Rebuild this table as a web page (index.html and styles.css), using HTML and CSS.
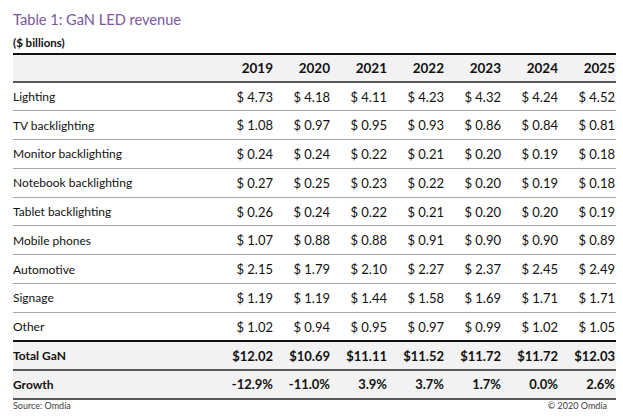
FILE: index.html
```html
<!DOCTYPE html>
<html>
<head>
<meta charset="utf-8">
<link rel="stylesheet" href="styles.css">
</head>
<body>
<div class="page">
  <div class="title">Table 1: GaN LED revenue</div>
  <div class="unit">($ billions)</div>
  <table class="rev">
    <thead>
      <tr><th class="lab"></th><th>2019</th><th>2020</th><th>2021</th><th>2022</th><th>2023</th><th>2024</th><th>2025</th></tr>
    </thead>
    <tbody>
      <tr><td class="lab">Lighting</td><td>$ 4.73</td><td>$ 4.18</td><td>$ 4.11</td><td>$ 4.23</td><td>$ 4.32</td><td>$ 4.24</td><td>$ 4.52</td></tr>
      <tr><td class="lab">TV backlighting</td><td>$ 1.08</td><td>$ 0.97</td><td>$ 0.95</td><td>$ 0.93</td><td>$ 0.86</td><td>$ 0.84</td><td>$ 0.81</td></tr>
      <tr><td class="lab">Monitor backlighting</td><td>$ 0.24</td><td>$ 0.24</td><td>$ 0.22</td><td>$ 0.21</td><td>$ 0.20</td><td>$ 0.19</td><td>$ 0.18</td></tr>
      <tr><td class="lab">Notebook backlighting</td><td>$ 0.27</td><td>$ 0.25</td><td>$ 0.23</td><td>$ 0.22</td><td>$ 0.20</td><td>$ 0.19</td><td>$ 0.18</td></tr>
      <tr><td class="lab">Tablet backlighting</td><td>$ 0.26</td><td>$ 0.24</td><td>$ 0.22</td><td>$ 0.21</td><td>$ 0.20</td><td>$ 0.20</td><td>$ 0.19</td></tr>
      <tr><td class="lab">Mobile phones</td><td>$ 1.07</td><td>$ 0.88</td><td>$ 0.88</td><td>$ 0.91</td><td>$ 0.90</td><td>$ 0.90</td><td>$ 0.89</td></tr>
      <tr><td class="lab">Automotive</td><td>$ 2.15</td><td>$ 1.79</td><td>$ 2.10</td><td>$ 2.27</td><td>$ 2.37</td><td>$ 2.45</td><td>$ 2.49</td></tr>
      <tr><td class="lab">Signage</td><td>$ 1.19</td><td>$ 1.19</td><td>$ 1.44</td><td>$ 1.58</td><td>$ 1.69</td><td>$ 1.71</td><td>$ 1.71</td></tr>
      <tr class="last"><td class="lab">Other</td><td>$ 1.02</td><td>$ 0.94</td><td>$ 0.95</td><td>$ 0.97</td><td>$ 0.99</td><td>$ 1.02</td><td>$ 1.05</td></tr>
      <tr class="total"><td class="lab">Total GaN</td><td>$12.02</td><td>$10.69</td><td>$11.11</td><td>$11.52</td><td>$11.72</td><td>$11.72</td><td>$12.03</td></tr>
      <tr class="growth"><td class="lab">Growth</td><td>-12.9%</td><td>-11.0%</td><td>3.9%</td><td>3.7%</td><td>1.7%</td><td>0.0%</td><td>2.6%</td></tr>
    </tbody>
  </table>
  <div class="foot"><span>Source: Omdia</span><span>© 2020 Omdia</span></div>
</div>
</body>
</html>
```
FILE: styles.css
```css
html, body {
  margin: 0;
  padding: 0;
  background: #ffffff;
}
body {
  font-family: Lato, "Open Sans", "Liberation Sans", sans-serif;
  color: #111111;
}
.page {
  width: 595px;
  padding-left: 13px;
}
.title {
  padding-top: 10px;
  height: 20px;
  line-height: 20px;
  font-size: 14.6px;
  color: #7a56a3;
}
.unit {
  height: 23px;
  padding-top: 5px;
  box-sizing: border-box;
  line-height: 16px;
  font-size: 11.5px;
  font-weight: bold;
  color: #111;
}
.rev {
  width: 595px;
  border-collapse: collapse;
  table-layout: fixed;
  font-size: 13px;
}
.rev th, .rev td {
  padding: 0 1px 0 0;
  text-align: right;
  white-space: nowrap;
  width: 56px;
}
.rev .lab {
  text-align: left;
  width: 203px;
  font-size: 12px;
}
.rev thead tr {
  height: 28px;
  background: #f2f2f2;
  border-top: 2px solid #111;
  border-bottom: 2px solid #595959;
}
.rev th {
  font-weight: bold;
  font-size: 13.5px;
}
.rev tbody tr {
  height: 28.8px;
  border-bottom: 1.5px solid #a6a6a6;
}
.rev tbody tr.last {
  border-bottom: 2px solid #111;
}
.rev tbody tr.total {
  background: #f2f2f2;
  font-weight: bold;
  border-bottom: 2px solid #595959;
}
.rev tbody tr.growth {
  background: #f2f2f2;
  font-weight: bold;
  border-bottom: 2.5px solid #595959;
}
.foot {
  display: flex;
  justify-content: space-between;
  width: 594px;
  font-size: 9px;
  line-height: 11px;
  color: #404040;
}
```
